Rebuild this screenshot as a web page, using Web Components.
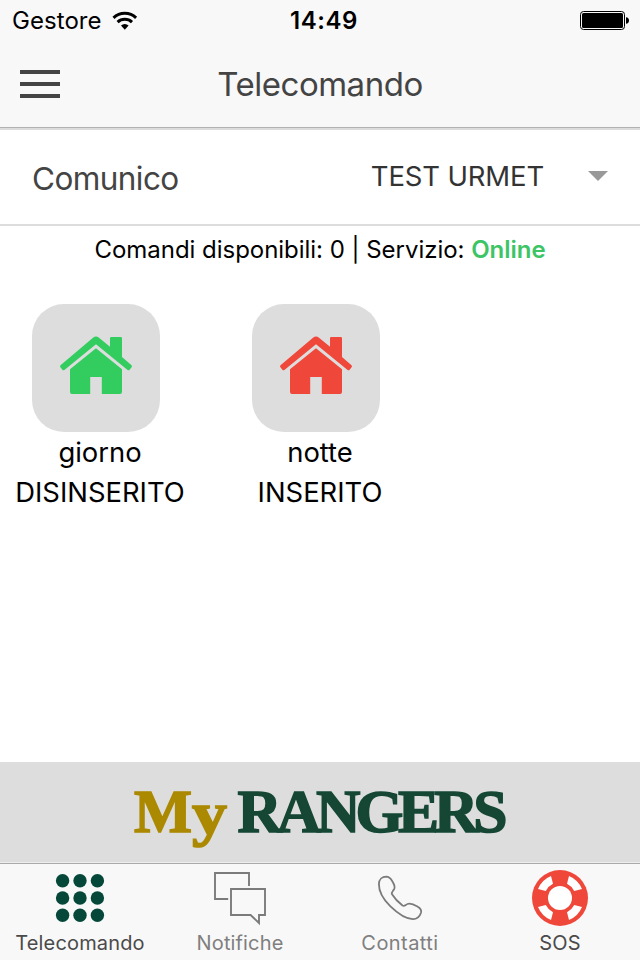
<!DOCTYPE html>
<html lang="it">
<head>
<meta charset="utf-8">
<title>Telecomando</title>
<style>
  body { margin: 0; font-family: Inter, "Liberation Sans", sans-serif; background: #fff; color: #000; }
</style>
</head>
<body>
<ranger-screen>
  <status-bar slot="top" carrier="Gestore" time="14:49"></status-bar>
  <nav-bar slot="top">Telecomando</nav-bar>
  <select-row label="Comunico">TEST URMET</select-row>
  <service-info count="0" state="Online"></service-info>
  <command-grid>
    <command-tile color="#33cd5f" state="DISINSERITO">giorno</command-tile>
    <command-tile color="#ef473a" state="INSERITO">notte</command-tile>
  </command-grid>
  <brand-banner slot="bottom"></brand-banner>
  <tab-bar slot="bottom">
    <tab-item icon="grid" style="--tab-color:#4a4a4a">Telecomando</tab-item>
    <tab-item icon="chat">Notifiche</tab-item>
    <tab-item icon="phone" style="--tab-spacing:.45px">Contatti</tab-item>
    <tab-item icon="sos" style="--tab-color:#4a4a4a">SOS</tab-item>
  </tab-bar>
</ranger-screen>

<script>
const ICONS = {
  grid: `<g fill="#05483a">${[14.6, 32, 49.4].map((x) =>
    [10.7, 28, 45.3].map((y) => `<circle cx="${x}" cy="${y}" r="6.7"/>`).join("")).join("")}</g>`,
  chat: `<g fill="none" stroke="#7b7b7b" stroke-width="1.9">
    <path d="M20.2 29H7V3H41V16"/>
    <path d="M23 19H57V45H51V53L42.6 45H23Z"/></g>`,
  phone: `<path fill="none" stroke="#7b7b7b" stroke-width="1.8" stroke-linejoin="round"
    d="M10.9 14C11 9.5 14.2 6.7 18.2 6.7C21 6.8 22.5 8.2 24.3 11.2C26.5 14.8 27.4 17.2 26.1 19.3C24.6 21.5 23.2 22.2 24 24.2C26.5 28.3 31 32.7 34.5 35.5C36.5 36.7 37.7 34.6 39.5 34C43 32.8 46 34.5 49.4 36.5C52.9 38.5 53.7 40.3 53 42.7C51.5 47.2 48.5 49.2 44.7 49.1C37.5 49 29.8 43.6 22.2 36.2C15.4 29.4 10.8 21.5 10.9 14Z"/>`,
  sos: `<circle cx="32" cy="28" r="28" fill="#ef473a"/><circle cx="32" cy="28" r="12" fill="#fff"/>
    <g fill="#fff">${[[1, 1], [-1, 1], [1, -1], [-1, -1]].map(([sx, sy]) =>
      `<path transform="translate(32 28) scale(${sx} ${sy})" d="M22 9A23.8 23.8 0 0 1 9 22L7 14.2A16 16 0 0 0 14.2 7Z"/>`).join("")}</g>`
};

class BaseElement extends HTMLElement {
  constructor() {
    super();
    this.attachShadow({ mode: "open" });
  }
  connectedCallback() { this.shadowRoot.innerHTML = this.render(); }
}

class RangerScreen extends BaseElement {
  render() {
    return `
      <style>
        :host { display: flex; flex-direction: column; width: 640px; height: 960px; overflow: hidden; }
        main { flex: 1; }
      </style>
      <slot name="top"></slot>
      <main><slot></slot></main>
      <slot name="bottom"></slot>`;
  }
}

class StatusBar extends BaseElement {
  render() {
    return `
      <style>
        :host { display: grid; grid-template-columns: 1fr auto 1fr; align-items: center; height: 40px;
                padding: 1px 11px 0 12px; box-sizing: border-box; background: #f8f8f8; font-size: 24px; }
        .left { display: flex; align-items: center; gap: 10px; }
        .carrier { letter-spacing: .05px; }
        .time { font-weight: 600; letter-spacing: .6px; padding-left: 7px; }
        .battery { justify-self: end; }
        svg { display: block; }
      </style>
      <div class="left">
        <span class="carrier">${this.getAttribute("carrier")}</span>
        <svg width="26" height="20" viewBox="0 0 26 20">
          <g fill="none" stroke="#000" stroke-width="3">
            <path d="M1.5 6.8A16.4 16.4 0 0 1 24.1 6.8"/>
            <path d="M5.6 11.1A10.4 10.4 0 0 1 20 11.1"/>
          </g>
          <path d="M9 14.6A5.5 5.5 0 0 1 16.6 14.6L12.8 18.8Z"/>
        </svg>
      </div>
      <span class="time">${this.getAttribute("time")}</span>
      <svg class="battery" width="49" height="19" viewBox="0 0 49 19">
        <rect x=".5" y=".5" width="44" height="18" rx="3" fill="none" stroke="#000"/>
        <rect x="2" y="2" width="41" height="15" rx="1.5"/>
        <path d="M46 6.2C48 6.4 49 7.8 49 9.5S48 12.6 46 12.8Z"/>
      </svg>`;
  }
}

class NavBar extends BaseElement {
  render() {
    return `
      <style>
        :host { display: grid; grid-template-columns: 1fr auto 1fr; align-items: center; height: 90px;
                padding: 0 20px; box-sizing: border-box; background: #f8f8f8;
                border-bottom: 2px solid #ddd; box-shadow: inset 0 -1px #b2b2b2; }
        .menu { display: grid; gap: 8px; width: 40px; }
        .menu i { height: 4px; background: #444; }
        h1 { margin: 0; padding-bottom: 1px; font-size: 33px; font-weight: 400; letter-spacing: -.49px; color: #444; }
      </style>
      <div class="menu"><i></i><i></i><i></i></div>
      <h1><slot></slot></h1>`;
  }
}

class SelectRow extends BaseElement {
  render() {
    return `
      <style>
        :host { display: flex; align-items: center; height: 96px; padding: 0 32px; box-sizing: border-box;
                border-bottom: 2px solid #ddd; }
        .label { flex: 1; font-size: 31.5px; letter-spacing: -.58px; color: #444; padding-top: 3px; }
        .value { font-size: 27.5px; letter-spacing: -.15px; color: #333; padding-bottom: 2px; }
        .arrow { margin: -2px 0 0 44px; border: 10px solid transparent; border-top-color: #999; border-bottom: 0; }
      </style>
      <span class="label">${this.getAttribute("label")}</span>
      <span class="value"><slot></slot></span>
      <span class="arrow"></span>`;
  }
}

class ServiceInfo extends BaseElement {
  render() {
    return `
      <style>
        :host { display: block; padding-top: 4px; text-align: center; font-size: 24px; line-height: 40px;
                letter-spacing: -.03px; }
        b { font-weight: 600; color: #3dc565; }
      </style>
      Comandi disponibili: ${this.getAttribute("count")} | Servizio: <b>${this.getAttribute("state")}</b>`;
  }
}

class CommandGrid extends BaseElement {
  render() {
    return `
      <style>
        :host { display: grid; grid-template-columns: 200px 200px; column-gap: 20px; padding-top: 34px; }
      </style>
      <slot></slot>`;
  }
}

class CommandTile extends BaseElement {
  render() {
    return `
      <style>
        :host { display: block; font-size: 27.4px; line-height: 40px; text-align: center; }
        .tile { width: 128px; height: 128px; margin-left: 32px; border-radius: 32px; background: #ddd; }
        svg { display: block; }
      </style>
      <div class="tile">
        <svg width="128" height="128" viewBox="0 0 128 128" fill="${this.getAttribute("color")}">
          <path d="M28.5 61.3L61 33.7Q64 31.2 67 33.7L78 42.7V34.2Q78 33 79.2 33H88.8Q90 33 90 34.2V53L99.5 61.3Q100.4 62.3 99.6 63.3L97.6 65.8Q96.7 66.8 95.6 65.9L64 40.2L32.4 65.9Q31.3 66.8 30.4 65.8L28.4 63.3Q27.6 62.3 28.5 61.3Z"/>
          <path d="M64 44.3L90 65.3V88Q90 90 88 90H69.8V73H58.2V90H40Q38 90 38 88V65.3Z"/>
        </svg>
      </div>
      <div><slot></slot></div>
      <div>${this.getAttribute("state")}</div>`;
  }
}

class BrandBanner extends BaseElement {
  render() {
    return `
      <style>
        :host { display: block; height: 100px; background: #ddd; }
        svg { display: block; }
        text { font-family: "Liberation Serif", serif; font-weight: 700; font-size: 61.5px; stroke-width: 1.6px; }
      </style>
      <svg width="640" height="100" viewBox="0 0 640 100">
        <text x="134" y="69.5" fill="#ab8900" stroke="#ab8900"><tspan>M</tspan><tspan x="192" dy="2" textLength="35" lengthAdjust="spacingAndGlyphs">y</tspan></text>
        <text x="237.5" y="69.5" fill="#154734" stroke="#154734" textLength="270" lengthAdjust="spacing">RANGERS</text>
      </svg>`;
  }
}

class TabBar extends BaseElement {
  render() {
    return `
      <style>
        :host { display: grid; grid-template-columns: repeat(4, 1fr); height: 98px; box-sizing: border-box;
                border-top: 1px solid #eee; box-shadow: inset 0 1px #aaa; background: #f8f8f8; }
      </style>
      <slot></slot>`;
  }
}

class TabItem extends BaseElement {
  render() {
    return `
      <style>
        :host { display: flex; flex-direction: column; align-items: center; padding-top: 7px;
                color: var(--tab-color, #7f7f7f); font-size: 20px; line-height: 34px;
                letter-spacing: var(--tab-spacing, .15px); }
        svg { display: block; }
      </style>
      <svg width="64" height="56" viewBox="0 0 64 56">${ICONS[this.getAttribute("icon")]}</svg>
      <span><slot></slot></span>`;
  }
}

customElements.define("ranger-screen", RangerScreen);
customElements.define("status-bar", StatusBar);
customElements.define("nav-bar", NavBar);
customElements.define("select-row", SelectRow);
customElements.define("service-info", ServiceInfo);
customElements.define("command-grid", CommandGrid);
customElements.define("command-tile", CommandTile);
customElements.define("brand-banner", BrandBanner);
customElements.define("tab-bar", TabBar);
customElements.define("tab-item", TabItem);
</script>
</body>
</html>
